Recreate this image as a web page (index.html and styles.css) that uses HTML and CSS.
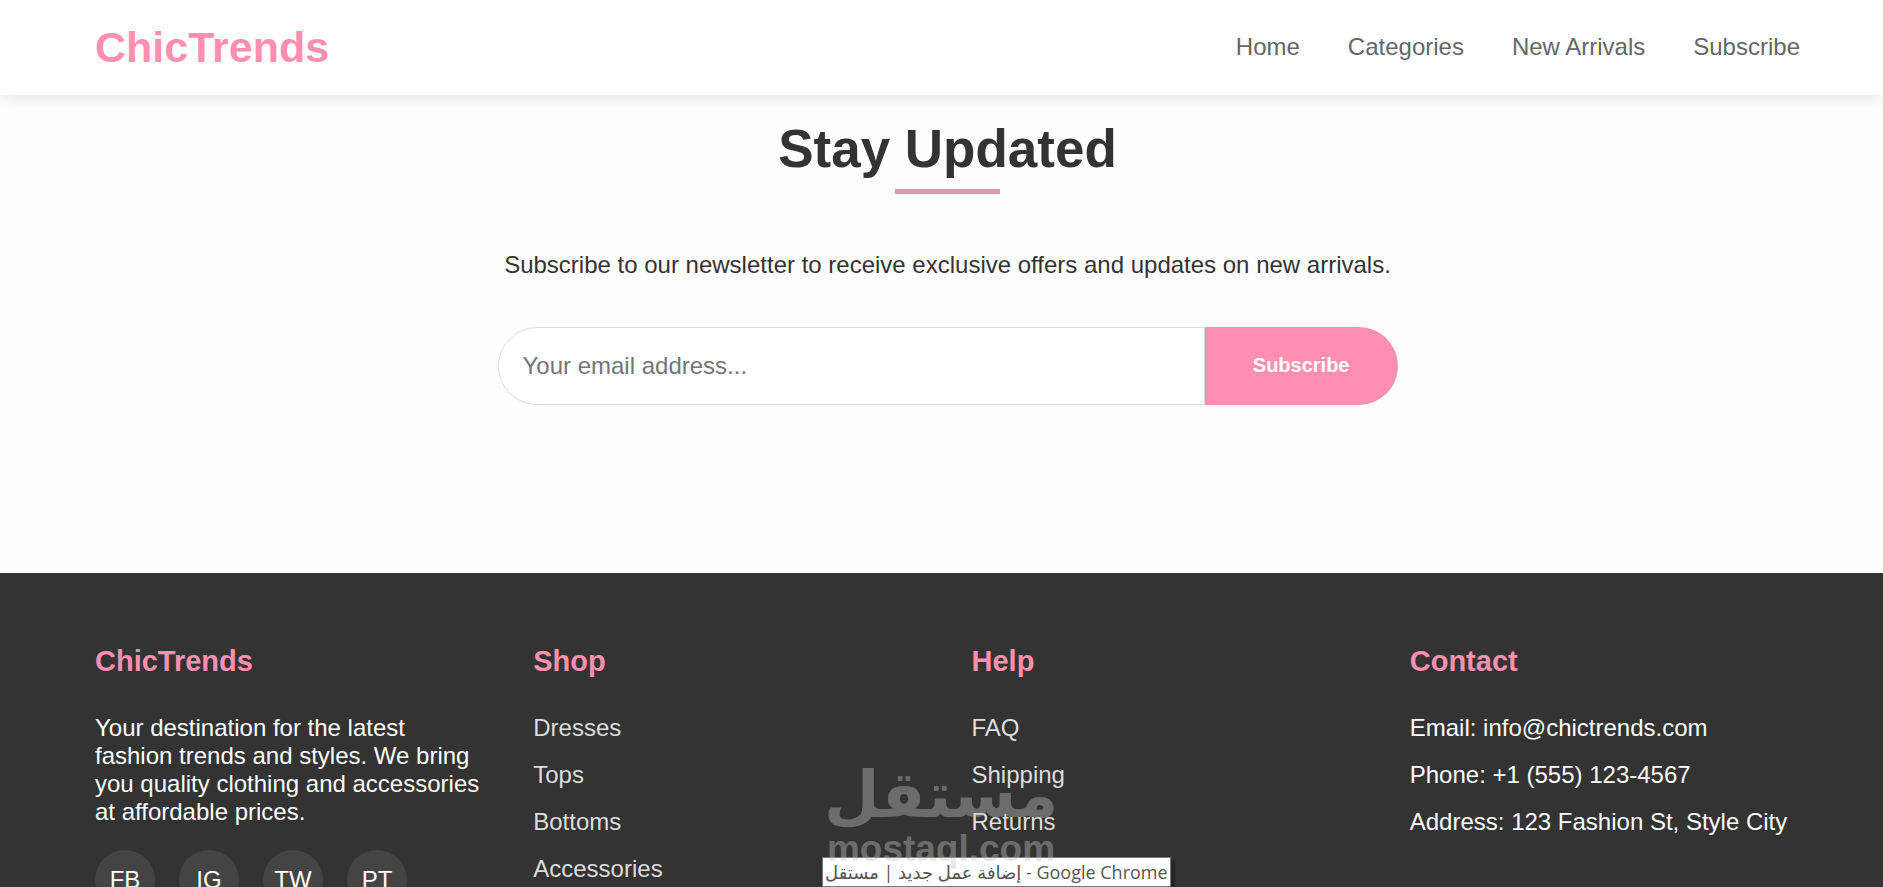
FILE: index.html
```html
<!DOCTYPE html>
<html lang="en">
<head>
  <meta charset="UTF-8">
  <meta name="viewport" content="width=device-width, initial-scale=1.0">
  <title>ChicTrends</title>
  <link rel="stylesheet" href="styles.css">
</head>
<body>
  <header>
    <div class="container header-content">
      <a href="#" class="logo">ChicTrends</a>
      <nav>
        <ul class="nav-links">
          <li><a href="#">Home</a></li>
          <li><a href="#categories">Categories</a></li>
          <li><a href="#arrivals">New Arrivals</a></li>
          <li><a href="#subscribe">Subscribe</a></li>
        </ul>
      </nav>
    </div>
  </header>

  <section class="newsletter" id="subscribe">
    <div class="container">
      <h2 class="section-title">Stay Updated</h2>
      <p>Subscribe to our newsletter to receive exclusive offers and updates on new arrivals.</p>
      <form class="newsletter-form">
        <input type="email" class="newsletter-input" placeholder="Your email address..." aria-label="Your email address" required>
        <button type="submit" class="newsletter-btn">Subscribe</button>
      </form>
    </div>
  </section>

  <footer>
    <div class="container footer-content">
      <div class="footer-column">
        <h3>ChicTrends</h3>
        <p>Your destination for the latest fashion trends and styles. We bring you quality clothing and accessories at affordable prices.</p>
        <div class="social-links">
          <a href="#">FB</a>
          <a href="#">IG</a>
          <a href="#">TW</a>
          <a href="#">PT</a>
        </div>
      </div>
      <div class="footer-column">
        <h3>Shop</h3>
        <ul class="footer-links">
          <li><a href="#">Dresses</a></li>
          <li><a href="#">Tops</a></li>
          <li><a href="#">Bottoms</a></li>
          <li><a href="#">Accessories</a></li>
        </ul>
      </div>
      <div class="footer-column">
        <h3>Help</h3>
        <ul class="footer-links">
          <li><a href="#">FAQ</a></li>
          <li><a href="#">Shipping</a></li>
          <li><a href="#">Returns</a></li>
        </ul>
      </div>
      <div class="footer-column">
        <h3>Contact</h3>
        <ul class="footer-links">
          <li>Email: info@chictrends.com</li>
          <li>Phone: +1 (555) 123-4567</li>
          <li>Address: 123 Fashion St, Style City</li>
        </ul>
      </div>
    </div>
  </footer>

  <div class="window-tip">إضافة عمل جديد | مستقل - Google Chrome</div>
  <div class="watermark">
    <span class="watermark-name" lang="ar">مستقل</span>
    <span class="watermark-url">mostaql.com</span>
  </div>
</body>
</html>
```
FILE: styles.css
```css
* {
  margin: 0;
  padding: 0;
  box-sizing: border-box;
}
body {
  font-family: "Liberation Sans", Arial, sans-serif;
  font-size: 24px;
  line-height: 28px;
  color: #333;
  background-color: #fefefe;
  height: 100vh;
  overflow: hidden;
}
a {
  text-decoration: none;
}
ul {
  list-style: none;
}
.container {
  padding: 0 83px 0 95px;
}

/* Header */
header {
  position: relative;
  background-color: #fff;
  box-shadow: 0 3px 15px rgba(0,0,0,0.1);
}
.header-content {
  display: flex;
  justify-content: space-between;
  align-items: center;
  height: 95px;
  padding-bottom: 2px;
}
.logo {
  font-size: 43px;
  line-height: 48px;
  font-weight: bold;
  color: #ff8fb1;
}
.nav-links {
  display: flex;
  gap: 48px;
}
.nav-links a {
  color: #666;
}

/* Newsletter */
.newsletter {
  padding: 24px 0 168px;
  text-align: center;
}
.section-title {
  font-size: 53px;
  line-height: 60px;
  margin-bottom: 57px;
}
.section-title::after {
  content: "";
  display: block;
  width: 105px;
  height: 5px;
  margin: 10px auto 0;
  background-color: #ff8fb1;
}
.newsletter-form {
  display: flex;
  max-width: 900px;
  margin: 48px auto 0;
}
.newsletter-input {
  flex: 1;
  height: 78px;
  padding: 0 24px;
  font-family: inherit;
  font-size: 24px;
  background-color: #fff;
  border: 1px solid #ddd;
  border-radius: 39px 0 0 39px;
  outline: none;
}
.newsletter-btn {
  padding: 0 48px 2px;
  font-family: inherit;
  font-size: 20px;
  font-weight: bold;
  color: #fff;
  background-color: #ff8fb1;
  border: none;
  border-radius: 0 39px 39px 0;
  cursor: pointer;
}

/* Footer */
footer {
  background-color: #333;
  color: #fff;
  padding: 72px 0;
}
.footer-content {
  display: grid;
  grid-template-columns: repeat(4, 1fr);
  gap: 48px;
}
.footer-column h3 {
  font-size: 29px;
  line-height: 33px;
  margin-bottom: 36px;
  color: #ff8fb1;
}
.footer-links li {
  margin-bottom: 19px;
}
.footer-links a {
  color: #ddd;
}
.social-links {
  display: flex;
  gap: 24px;
  margin-top: 24px;
}
.social-links a {
  display: flex;
  justify-content: center;
  align-items: center;
  width: 60px;
  height: 60px;
  border-radius: 50%;
  background-color: #444;
  color: #fff;
}

/* Overlays */
.watermark {
  position: absolute;
  left: 828px;
  bottom: 18px;
  width: 226px;
  display: flex;
  flex-direction: column;
  align-items: center;
  font-weight: bold;
  color: #c5c5c5;
  opacity: 0.39;
  pointer-events: none;
}
.watermark-name {
  font-family: "DejaVu Sans", sans-serif;
  font-size: 64px;
  line-height: 68px;
}
.watermark-url {
  font-size: 37px;
  line-height: 40px;
}
.window-tip {
  position: absolute;
  left: 822px;
  bottom: 0;
  padding: 0 2px;
  font-family: "Open Sans", "DejaVu Sans", sans-serif;
  font-size: 18px;
  line-height: 28px;
  white-space: nowrap;
  color: #555;
  background-color: #fff;
  border: 1px solid #777;
  box-shadow: 4px 4px 2px rgba(0,0,0,0.3);
}
```
